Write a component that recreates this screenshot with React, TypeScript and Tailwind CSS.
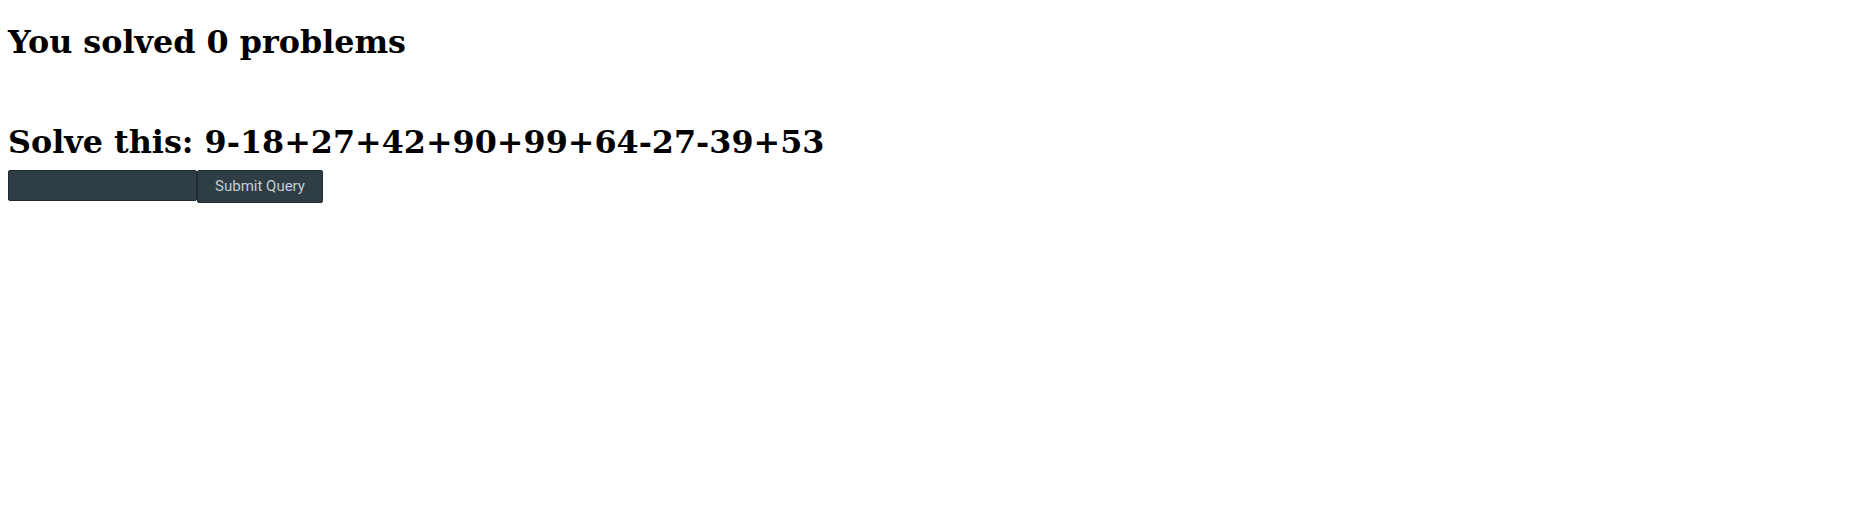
export default function App() {
  return (
    <div className="px-2 pt-[23px] font-['DejaVu_Serif',serif]">
      <h1 className="text-[31.8px] font-bold leading-[37px] text-black">You solved 0 problems</h1>
      <div className="h-[63px]" />
      <h1 className="text-[31.8px] font-bold leading-[37px] text-black">
        Solve this: 9-18+27+42+90+99+64-27-39+53
      </h1>
      <form className="mt-[10px] flex items-start" onSubmit={(e) => e.preventDefault()}>
        <input
          type="text"
          className="h-[31px] w-[189px] rounded-[2px] border border-[#1f2b31] bg-[#2f3d45] px-1 text-[#c5ccd0] outline-none"
        />
        <button
          type="submit"
          className="h-[33px] w-[126px] rounded-[2px] border border-[#1f2b31] bg-[#2f3d45] font-['Roboto',sans-serif] text-[15px] text-[#c5ccd0]"
        >
          Submit Query
        </button>
      </form>
    </div>
  );
}
